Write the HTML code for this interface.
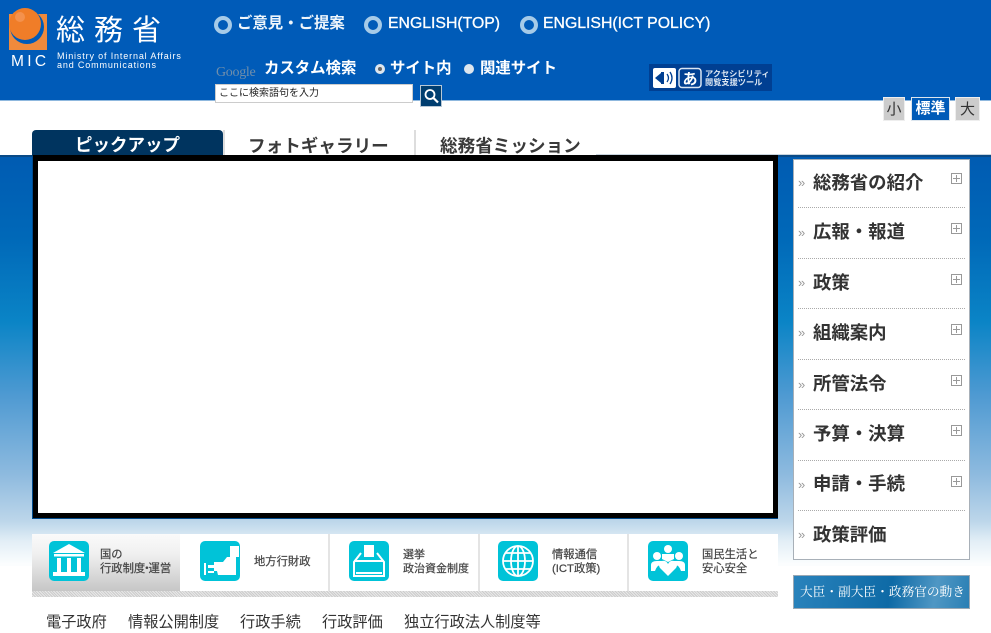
<!DOCTYPE html>
<html lang="ja"><head><meta charset="utf-8"><title>総務省</title>
<style>
html,body{margin:0;padding:0;background:#fff}
body{width:991px;height:624px;overflow:hidden;position:relative;font-family:"Liberation Sans","Noto Sans CJK JP",sans-serif}
.a{position:absolute;white-space:nowrap}
.w{color:#fff}
.ring{position:absolute;width:10px;height:10px;border:4px solid #a6cbe8;border-radius:50%;background:#005bb8}
.tab{font-weight:700;font-size:17.6px;color:#3a3a3a;line-height:22px}
.side{font-weight:700;font-size:18.4px;color:#333;left:813px;line-height:22px}
.raq{left:798px;color:#999;font-size:13px;line-height:14px}
.plus{position:absolute;left:951px;width:9px;height:9px;border:1px solid #999;background:linear-gradient(#999,#999) center/7px 1px no-repeat,linear-gradient(#999,#999) center/1px 7px no-repeat}
.sep{position:absolute;left:798px;width:167px;border-top:1px dotted #aaa}
.nav{position:absolute;top:534px;height:57px;width:148px;background:#fff;border-right:2px solid #e4e4e4}
.ic{position:absolute;top:541px;width:40px;height:40px;background:#00c3d8;border-radius:5px}
.lbl{font-size:11.300px;line-height:14px;color:#444;-webkit-text-stroke:.2px #444}
.sub{font-size:15.200px;color:#333;top:613px;line-height:20px}
</style></head><body>
<div class="a" style="left:0;top:0;width:991px;height:100px;background:#005bb8"></div>
<div class="a" style="left:0;top:100px;width:991px;height:1px;background:#8fb8de"></div>
<div class="a" style="left:0;top:156px;width:991px;height:410px;background:linear-gradient(#005bb2 0,#0068b8 80px,#0a84c6 165px,#4f9ad2 240px,#8fbbdf 320px,#bcd6ea 365px,#e2eef6 385px,#fbfdfe 408px)"></div>
<div class="a" style="left:0;top:155px;width:33px;height:2px;background:#0a4a86"></div>
<div class="a" style="left:778px;top:155px;width:213px;height:2px;background:#0a4a86"></div>
<div class="a" style="left:596px;top:154px;width:395px;height:1px;background:#c8d4de"></div>

<svg class="a" style="left:9px;top:8px" width="40" height="44" viewBox="0 0 40 44">
<rect x="0" y="6" width="38" height="36" fill="#f08a3c"/>
<circle cx="18" cy="19" r="17" fill="#005bb8"/>
<path d="M31 6h7v13h-2q0-7-5-13z" fill="#f08a3c"/>
<circle cx="16" cy="16" r="16" fill="#f07d28"/>
<circle cx="11" cy="9" r="5" fill="#f59a5c" opacity=".7"/>
</svg>
<div class="a w" style="left:11px;top:54px;font-size:15.500px;letter-spacing:3.300px;line-height:16px">MIC</div>
<div class="a w" style="left:56px;top:13px;font-size:29px;letter-spacing:9px;line-height:36px;font-weight:400">総務省</div>
<div class="a w" style="left:57px;top:52px;font-size:9px;line-height:9px;letter-spacing:.85px">Ministry of Internal Affairs<br>and Communications</div>

<div class="ring" style="left:214px;top:16px"></div>
<div class="a w" style="left:237px;top:14px;font-size:15.400px;font-weight:700;line-height:20px;color:#eef5fb">ご意見・ご提案</div>
<div class="ring" style="left:364px;top:16px"></div>
<div class="a w" style="left:388px;top:14px;font-size:15.800px;line-height:20px;-webkit-text-stroke:.3px #fff">ENGLISH(TOP)</div>
<div class="ring" style="left:520px;top:16px"></div>
<div class="a w" style="left:543px;top:14px;font-size:15.800px;line-height:20px;-webkit-text-stroke:.3px #fff">ENGLISH(ICT POLICY)</div>

<div class="a" style="left:216px;top:65px;font-family:'Liberation Serif',serif;font-size:14px;color:#6f8eab;line-height:16px;letter-spacing:-.3px">Google</div>
<div class="a w" style="left:264px;top:59px;font-size:15.400px;font-weight:700;line-height:20px">カスタム検索</div>
<div class="a" style="left:375px;top:64px;width:10px;height:10px;border-radius:50%;background:#dde6ee"><div style="position:absolute;left:3px;top:3px;width:4px;height:4px;border-radius:50%;background:#666"></div></div>
<div class="a w" style="left:390px;top:59px;font-size:15.400px;font-weight:700;line-height:20px">サイト内</div>
<div class="a" style="left:464px;top:64px;width:10px;height:10px;border-radius:50%;background:#dde6ee"></div>
<div class="a w" style="left:480px;top:59px;font-size:15.400px;font-weight:700;line-height:20px">関連サイト</div>
<div class="a" style="left:215px;top:84px;width:196px;height:17px;background:#fff;border:1px solid #ccc;font-size:10px;line-height:18px;color:#222;text-indent:3px">ここに検索語句を入力</div>
<svg class="a" style="left:420px;top:85px" width="22" height="22" viewBox="0 0 22 22"><rect width="22" height="22" fill="#003e70"/><rect x=".5" y=".5" width="21" height="21" fill="none" stroke="#b8c8d6"/><circle cx="10" cy="9.500" r="4.500" fill="none" stroke="#fff" stroke-width="1.800"/><path d="M13.500 13l4.500 4.500" stroke="#fff" stroke-width="2.200"/></svg>

<svg class="a" style="left:649px;top:64px" width="123" height="27" viewBox="0 0 123 27"><rect width="123" height="27" fill="#003f92"/><rect x="4" y="4" width="23" height="20" rx="2" fill="#fff"/><path d="M6 14l6-5v10z M12 8h3v12h-3z" fill="#003f92"/><path d="M18 10q3 4 0 8M21 8q4 6 0 12" fill="none" stroke="#003f92" stroke-width="1.300"/><rect x="30" y="4.500" width="22" height="19" rx="3" fill="#003f92" stroke="#dbe6f2" stroke-width="1.500"/><text x="41" y="20" font-size="15" fill="#fff" font-weight="700" text-anchor="middle" font-family="Liberation Sans,Noto Sans CJK JP,sans-serif">あ</text><text x="56" y="12.500" font-size="8.200" fill="#dbe6f2" font-weight="700" font-family="Liberation Sans,Noto Sans CJK JP,sans-serif">アクセシビリティ</text><text x="56" y="21" font-size="8.200" fill="#dbe6f2" font-weight="700" font-family="Liberation Sans,Noto Sans CJK JP,sans-serif">閲覧支援ツール</text></svg>

<div class="a" style="left:883px;top:97px;width:22px;height:24px;background:#ccc;border:1px solid #eee;box-sizing:border-box;text-align:center;font-size:15px;line-height:23px;color:#333">小</div>
<div class="a" style="left:911px;top:97px;width:39px;height:24px;background:#005bb8;border:1px solid #dde6ee;box-sizing:border-box;text-align:center;font-size:15px;line-height:22px;color:#fff;font-weight:700">標準</div>
<div class="a" style="left:955px;top:97px;width:25px;height:24px;background:#ccc;border:1px solid #eee;box-sizing:border-box;text-align:center;font-size:15px;line-height:23px;color:#333">大</div>

<div class="a" style="left:32px;top:130px;width:191px;height:27px;background:#00345f;border-radius:4px 4px 0 0"></div>
<div class="a w" style="left:75px;top:134px;font-size:17.500px;font-weight:700;line-height:22px">ピックアップ</div>
<div class="a" style="left:223px;top:130px;width:2px;height:26px;background:#ddd"></div>
<div class="a tab" style="left:248px;top:135px">フォトギャラリー</div>
<div class="a" style="left:414px;top:130px;width:2px;height:26px;background:#ddd"></div>
<div class="a tab" style="left:440px;top:135px">総務省ミッション</div>

<div class="a" style="left:32px;top:156px;width:746px;height:363px;background:#004a8c"></div>
<div class="a" style="left:33px;top:155px;width:745px;height:363px;background:#fff;border:5px solid #000;border-top-width:6px;box-sizing:border-box"></div>

<div class="a" style="left:793px;top:159px;width:177px;height:401px;background:#fff;border:1px solid #a8b0b8;box-sizing:border-box"></div>
<div class="a raq" style="top:176px">»</div><div class="a side" style="top:172px">総務省の紹介</div><div class="plus" style="top:173px"></div><div class="sep" style="top:207px"></div>
<div class="a raq" style="top:226px">»</div><div class="a side" style="top:221px">広報・報道</div><div class="plus" style="top:223px"></div><div class="sep" style="top:258px"></div>
<div class="a raq" style="top:276px">»</div><div class="a side" style="top:272px">政策</div><div class="plus" style="top:274px"></div><div class="sep" style="top:308px"></div>
<div class="a raq" style="top:326px">»</div><div class="a side" style="top:322px">組織案内</div><div class="plus" style="top:324px"></div><div class="sep" style="top:359px"></div>
<div class="a raq" style="top:378px">»</div><div class="a side" style="top:373px">所管法令</div><div class="plus" style="top:375px"></div><div class="sep" style="top:409px"></div>
<div class="a raq" style="top:428px">»</div><div class="a side" style="top:423px">予算・決算</div><div class="plus" style="top:425px"></div><div class="sep" style="top:460px"></div>
<div class="a raq" style="top:478px">»</div><div class="a side" style="top:473px">申請・手続</div><div class="plus" style="top:476px"></div><div class="sep" style="top:510px"></div>
<div class="a raq" style="top:528px">»</div><div class="a side" style="top:524px">政策評価</div>

<div class="a" style="left:793px;top:575px;width:177px;height:34px;background:linear-gradient(100deg,#2a83bc,#0e6aa6 55%,#4f97c4 80%,#2a7fb4);border:1px solid #9aa8b4;box-sizing:border-box"></div>
<div class="a w" style="left:800px;top:582px;font-family:'Liberation Serif','Noto Serif CJK SC',serif;font-size:12.700px;line-height:20px">大臣・副大臣・政務官の動き</div>

<div class="nav" style="left:32px;background:linear-gradient(#fafafa,#f0f0f0 35%,#c6c6c6);width:148px;border-right:2px solid #fff"></div>
<div class="nav" style="left:182px;width:146px"></div>
<div class="nav" style="left:330px;width:148px"></div>
<div class="nav" style="left:480px;width:147px"></div>
<div class="nav" style="left:629px;width:149px;border-right:0"></div>
<div class="a" style="left:32px;top:591px;width:746px;height:6px;background:repeating-linear-gradient(45deg,#ccc 0 1px,#e8e8e8 1px 2px)"></div>

<svg class="ic" style="left:49px" viewBox="0 0 40 40"><path d="M20 3L36 12H4z" fill="#fff"/><rect x="5" y="13" width="30" height="2.500" fill="#fff"/><path d="M8 17h4v14H8zM18 17h4v14h-4zM28 17h4v14h-4z" fill="#fff"/><rect x="4" y="31" width="32" height="4" fill="#fff"/></svg>
<div class="a lbl" style="left:100px;top:548px">国の<br>行政制度<span style="margin:0 -4px">・</span>運営</div>

<svg class="ic" style="left:200px" viewBox="0 0 40 40"><path d="M30 5h9v11h-3v18H18l-1-4h-3v-9h9l4-5h3z" fill="#fff"/><path d="M4 22h2v12H4zM8 24h6v3H8zM8 30h6v2H8z" fill="#fff"/></svg>
<div class="a lbl" style="left:254px;top:555px">地方行財政</div>

<svg class="ic" style="left:349px" viewBox="0 0 40 40"><path d="M15 4h10v12h-10z" fill="#fff"/><path d="M12 12L5 21v14h30V21l-7-9" fill="none" stroke="#fff" stroke-width="2"/><path d="M5 20h30M7 32h26" stroke="#fff" stroke-width="2"/></svg>
<div class="a lbl" style="left:403px;top:548px;font-size:11px">選挙<br>政治資金制度</div>

<svg class="ic" style="left:498px" viewBox="0 0 40 40"><g fill="none" stroke="#fff" stroke-width="1.800"><circle cx="20" cy="20" r="15"/><ellipse cx="20" cy="20" rx="7" ry="15"/><path d="M5 20h30M7 12h26M7 28h26M20 5v30"/></g></svg>
<div class="a lbl" style="left:552px;top:548px">情報通信<br>(ICT政策)</div>

<svg class="ic" style="left:648px" viewBox="0 0 40 40"><g fill="#fff"><circle cx="9" cy="15" r="4"/><circle cx="31" cy="15" r="4"/><circle cx="20" cy="8" r="4"/><path d="M3 30v-6q0-4 6-4h5v3q-5 1-7 7zM37 30v-6q0-4-6-4h-5v3q5 1 7 7zM14 13h12v5l-6 3-6-3z"/><path d="M20 35l-8-8q-3-5 2-7 4-1 6 3 2-4 6-3 5 2 2 7z"/></g></svg>
<div class="a lbl" style="left:702px;top:548px">国民生活と<br>安心安全</div>

<div class="a sub" style="left:46px">電子政府</div>
<div class="a sub" style="left:128px">情報公開制度</div>
<div class="a sub" style="left:240px">行政手続</div>
<div class="a sub" style="left:322px">行政評価</div>
<div class="a sub" style="left:404px">独立行政法人制度等</div>
</body></html>
